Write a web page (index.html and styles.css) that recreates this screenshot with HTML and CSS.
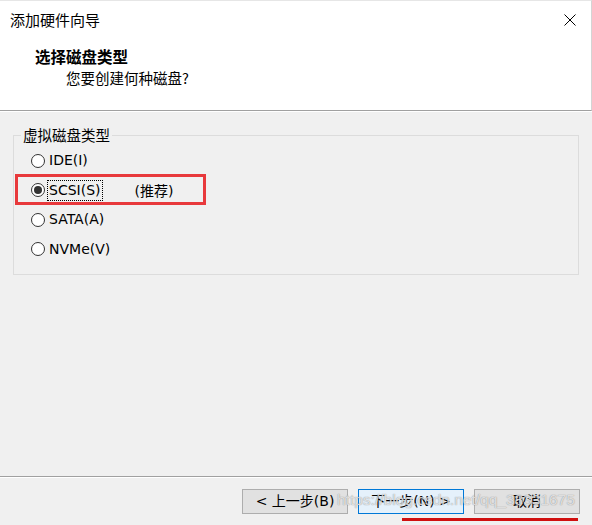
FILE: index.html
```
<!DOCTYPE html>
<html lang="zh">
<head>
<meta charset="utf-8">
<title>添加硬件向导</title>
<link rel="stylesheet" href="styles.css">
</head>
<body>
<div class="window">
  <div class="top">
    <div class="titlebar">
      <span class="title">添加硬件向导</span>
      <svg class="close" width="12" height="12" viewBox="0 0 12 12"><path d="M0.5 0.5 L11.5 11.5 M11.5 0.5 L0.5 11.5" stroke="#000" stroke-width="1" fill="none"/></svg>
    </div>
    <div class="header">
      <div class="h-title">选择磁盘类型</div>
      <div class="h-sub">您要创建何种磁盘?</div>
    </div>
  </div>
  <div class="content">
    <fieldset class="group">
      <legend>虚拟磁盘类型</legend>
      <div class="row"><span class="radio"></span><span class="label">IDE(I)</span></div>
      <div class="row"><span class="radio checked"></span><span class="label focus">SCSI(S)</span><span class="rec">(推荐)</span></div>
      <div class="row"><span class="radio"></span><span class="label">SATA(A)</span></div>
      <div class="row"><span class="radio"></span><span class="label">NVMe(V)</span></div>
    </fieldset>
  </div>
  <div class="footer">
    <button class="btn">&lt; 上一步(B)</button>
    <button class="btn default">下一步(N) &gt;</button>
    <button class="btn">取消</button>
  </div>
  <div class="mark-box"></div>
  <div class="mark-line"></div>
  <div class="watermark">https://blog.csdn.net/qq_38331675</div>
</div>
</body>
</html>
```
FILE: styles.css
```
html, body {
  margin: 0;
  padding: 0;
}
body {
  width: 592px;
  height: 525px;
  overflow: hidden;
  background: #f0f0f0;
  font-family: "DejaVu Sans", "Noto Sans CJK SC", sans-serif;
  font-size: 14px;
  color: #000;
}
.window {
  position: relative;
  width: 592px;
  height: 525px;
  display: flex;
  flex-direction: column;
}
.top {
  box-sizing: border-box;
  height: 111px;
  background: #fff;
  border-top: 1px solid #e6e6e6;
  border-bottom: 1px solid #a0a0a0;
  border-right: 1px solid #d4d4d4;
  box-shadow: 0 1px 0 #fff;
  position: relative;
  z-index: 1;
}
.titlebar {
  height: 37px;
  display: flex;
  align-items: center;
  justify-content: space-between;
  padding: 0 15px 0 10px;
}
.title {
  font-family: "Noto Sans CJK SC", sans-serif;
  font-size: 15px;
  line-height: 20px;
}
.close {
  display: block;
}
.header {
  padding-left: 35px;
  padding-top: 8px;
}
.h-title {
  font-family: "Noto Sans CJK SC", sans-serif;
  font-weight: bold;
  font-size: 15.5px;
  line-height: 20px;
}
.h-sub {
  font-family: "Noto Sans CJK SC", sans-serif;
  font-size: 14.5px;
  line-height: 20px;
  margin-top: 2px;
  padding-left: 31px;
}
.content {
  flex: 1;
  padding: 14px 13px 0 13px;
}
.group {
  margin: 0;
  padding: 1px 0 10px 17px;
  border: 1px solid #dcdcdc;
  box-sizing: border-box;
  width: 566px;
}
.group legend {
  font-family: "Noto Sans CJK SC", sans-serif;
  font-size: 14.5px;
  line-height: 20px;
  padding: 0 2px;
  margin-left: -10px;
}
.row {
  height: 29.5px;
  display: flex;
  align-items: center;
}
.radio {
  box-sizing: border-box;
  width: 14px;
  height: 14px;
  border: 1px solid #333;
  border-radius: 50%;
  background: #fff;
  display: flex;
  align-items: center;
  justify-content: center;
  margin-right: 2px;
}
.radio.checked::after {
  content: "";
  width: 8px;
  height: 8px;
  border-radius: 50%;
  background: #333;
}
.label {
  line-height: 19px;
  padding: 0 1px;
  border: 1px dotted transparent;
}
.label.focus {
  border-color: #000;
}
.rec {
  margin-left: 32px;
}
.footer {
  box-sizing: border-box;
  height: 49px;
  border-top: 1px solid #a0a0a0;
  box-shadow: inset 0 1px 0 #fff;
  padding: 12px 12px 0 0;
  display: flex;
  justify-content: flex-end;
  align-items: flex-start;
  gap: 10px;
}
.btn {
  box-sizing: border-box;
  width: 106px;
  height: 25px;
  margin: 0;
  padding: 0;
  background: #e1e1e1;
  border: 1px solid #adadad;
  font-family: "DejaVu Sans", "Noto Sans CJK SC", sans-serif;
  font-size: 14px;
  color: #000;
  line-height: 21px;
}
.btn.default {
  background: #e5f1fb;
  border-color: #0078d7;
}
.mark-box {
  position: absolute;
  left: 15px;
  top: 174px;
  width: 191px;
  height: 31px;
  box-sizing: border-box;
  border: 3px solid #e8393c;
}
.mark-line {
  position: absolute;
  left: 402px;
  top: 518px;
  width: 176px;
  height: 3px;
  background: #d01010;
}
.watermark {
  position: absolute;
  left: 337px;
  top: 490px;
  font-family: "Liberation Sans", Arial, sans-serif;
  font-size: 15.5px;
  line-height: 20px;
  color: rgba(255, 255, 255, 0.7);
  text-shadow: 0 0 1px rgba(110, 110, 110, 0.6), 0 0 1px rgba(110, 110, 110, 0.4);
  white-space: nowrap;
}
```
